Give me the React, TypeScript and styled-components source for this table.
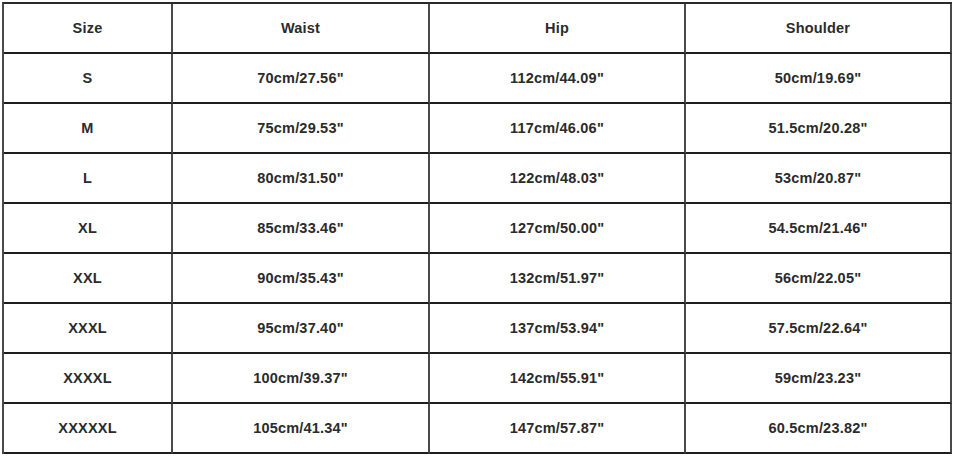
import styled, { createGlobalStyle } from "styled-components";

const GlobalStyle = createGlobalStyle`
  body {
    margin: 0;
    background: #ffffff;
    font-family: "Liberation Sans", Arial, sans-serif;
  }
`;

const Wrapper = styled.div`
  padding: 2px 0 0 2px;
`;

const Grid = styled.div`
  display: grid;
  grid-template-columns: 169px 257px 256px 266px;
  grid-auto-rows: 50px;
  width: max-content;
  border-left: 2px solid #4a4a4a;
  border-top: 2px solid #2a2a2a;
`;

const Cell = styled.div`
  display: flex;
  align-items: center;
  justify-content: center;
  box-sizing: border-box;
  border-right: 2px solid #4a4a4a;
  border-bottom: 2px solid #1e1e1e;
  font-size: 14.5px;
  letter-spacing: 0.2px;
  font-weight: 700;
  color: #2b2b2b;
`;

const columns = ["Size", "Waist", "Hip", "Shoulder"];

const rows = [
  ["S", "70cm/27.56\"", "112cm/44.09\"", "50cm/19.69\""],
  ["M", "75cm/29.53\"", "117cm/46.06\"", "51.5cm/20.28\""],
  ["L", "80cm/31.50\"", "122cm/48.03\"", "53cm/20.87\""],
  ["XL", "85cm/33.46\"", "127cm/50.00\"", "54.5cm/21.46\""],
  ["XXL", "90cm/35.43\"", "132cm/51.97\"", "56cm/22.05\""],
  ["XXXL", "95cm/37.40\"", "137cm/53.94\"", "57.5cm/22.64\""],
  ["XXXXL", "100cm/39.37\"", "142cm/55.91\"", "59cm/23.23\""],
  ["XXXXXL", "105cm/41.34\"", "147cm/57.87\"", "60.5cm/23.82\""],
];

function App() {
  return (
    <Wrapper>
      <GlobalStyle />
      <Grid>
        {columns.map((c) => (
          <Cell key={c}>{c}</Cell>
        ))}
        {rows.map((row) =>
          row.map((v, i) => <Cell key={row[0] + i}>{v}</Cell>)
        )}
      </Grid>
    </Wrapper>
  );
}

export default App;
